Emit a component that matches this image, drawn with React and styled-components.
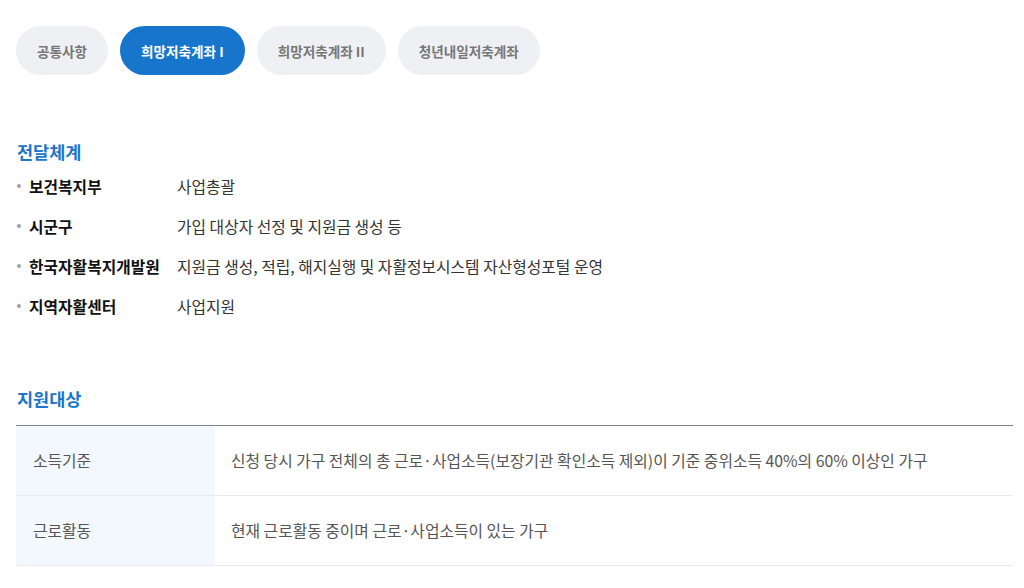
import styled, { createGlobalStyle } from "styled-components";

const GlobalStyle = createGlobalStyle`
  body {
    margin: 0;
    background: #fff;
    font-family: "Noto Sans CJK KR", "Noto Sans", sans-serif;
  }
`;

const Page = styled.div`
  padding: 26px 11px 0 16px;
`;

const TabRow = styled.div`
  display: flex;
  gap: 12px;
`;

const Tab = styled.button`
  height: 49px;
  padding: 0 21px;
  border: 0;
  border-radius: 25px;
  font-family: inherit;
  font-size: 13.6px;
  font-weight: 700;
  background: ${({ active }) => (active ? "#1776cc" : "#eff0f3")};
  color: ${({ active }) => (active ? "#fff" : "#777")};
`;

const SectionTitle = styled.h3`
  margin: ${({ top }) => top}px 0 0 1px;
  font-size: 17.5px;
  line-height: 24px;
  font-weight: 700;
  color: #1a76cc;
`;

const List = styled.ul`
  list-style: none;
  margin: 2px 0 0;
  padding: 0;
`;

const Item = styled.li`
  display: flex;
  align-items: center;
  height: 40px;
  font-size: 15.8px;
  color: #222;

  &::before {
    content: "";
    width: 4px;
    height: 4px;
    border-radius: 50%;
    background: #a0a0a0;
    margin: 0 8px 0 1px;
  }
`;

const Label = styled.strong`
  width: 148px;
  font-weight: 700;
  color: #111;
`;

const Desc = styled.span`
  color: #333;
`;

const Table = styled.div`
  margin-top: 14px;
  border-top: 1px solid #7d828a;
`;

const Row = styled.div`
  display: grid;
  grid-template-columns: 199px 1fr;
  height: 69px;
  border-bottom: 1px solid #e9eaec;
`;

const Head = styled.div`
  display: flex;
  align-items: center;
  padding-left: 17px;
  background: #f3f8fe;
  font-size: 15.8px;
  color: #555;
`;

const Cell = styled.div`
  display: flex;
  align-items: center;
  padding-left: 16px;
  font-size: 15.8px;
  color: #555;
`;

const tabs = ["공통사항", "희망저축계좌 I", "희망저축계좌 II", "청년내일저축계좌"];

const system = [
  ["보건복지부", "사업총괄"],
  ["시군구", "가입 대상자 선정 및 지원금 생성 등"],
  ["한국자활복지개발원", "지원금 생성, 적립, 해지실행 및 자활정보시스템 자산형성포털 운영"],
  ["지역자활센터", "사업지원"],
];

const targets = [
  ["소득기준", "신청 당시 가구 전체의 총 근로·사업소득(보장기관 확인소득 제외)이 기준 중위소득 40%의 60% 이상인 가구"],
  ["근로활동", "현재 근로활동 중이며 근로·사업소득이 있는 가구"],
];

export default function App() {
  return (
    <Page>
      <GlobalStyle />
      <TabRow>
        {tabs.map((t, i) => (
          <Tab key={t} active={i === 1}>
            {t}
          </Tab>
        ))}
      </TabRow>

      <SectionTitle top={65}>전달체계</SectionTitle>
      <List>
        {system.map(([k, v]) => (
          <Item key={k}>
            <Label>{k}</Label>
            <Desc>{v}</Desc>
          </Item>
        ))}
      </List>

      <SectionTitle top={61}>지원대상</SectionTitle>
      <Table>
        {targets.map(([k, v]) => (
          <Row key={k}>
            <Head>{k}</Head>
            <Cell>{v}</Cell>
          </Row>
        ))}
      </Table>
    </Page>
  );
}
